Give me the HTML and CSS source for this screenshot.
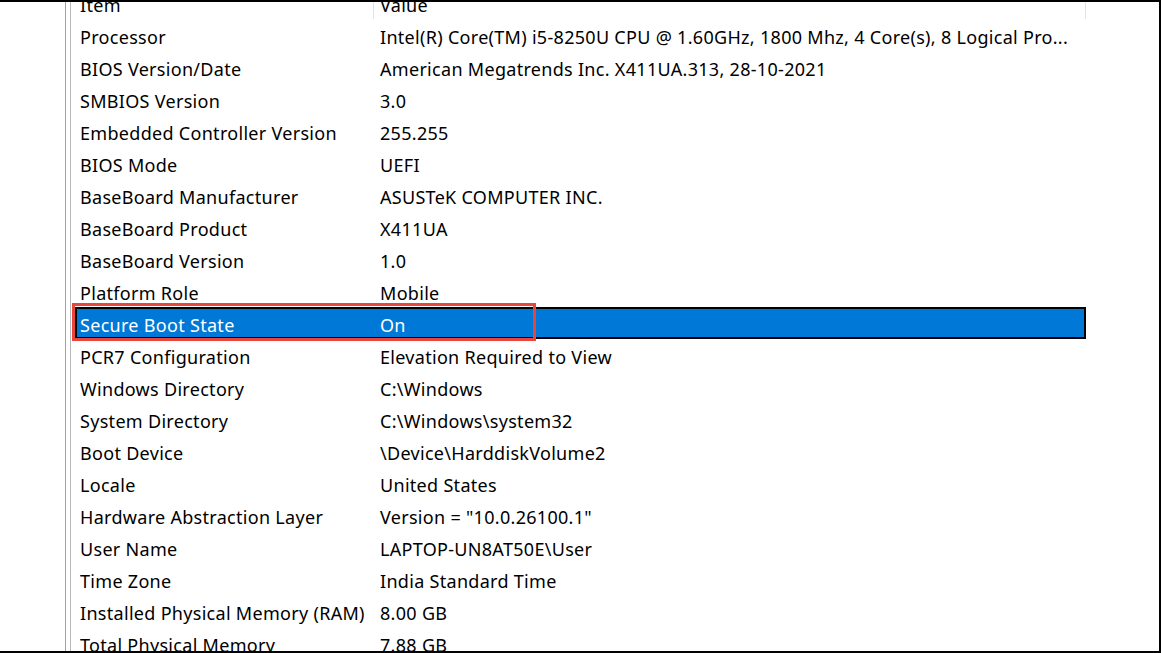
FILE: index.html
```html
<!DOCTYPE html>
<html lang="en">
<head>
<meta charset="utf-8">
<title>System Information</title>
<link rel="stylesheet" href="styles.css">
</head>
<body>
<div class="frame">
  <div class="gutter"></div>
  <div class="panel">
    <div class="inner">
      <div class="list">
        <div class="header">
          <div class="hcell hitem"><span class="htext">Item</span></div>
          <div class="hcell hvalue"><span class="htext">Value</span></div>
        </div>
        <div class="row"><div class="cell">Processor</div><div class="cell">Intel(R) Core(TM) i5-8250U CPU @ 1.60GHz, 1800 Mhz, 4 Core(s), 8 Logical Pro...</div></div>
        <div class="row"><div class="cell">BIOS Version/Date</div><div class="cell">American Megatrends Inc. X411UA.313, 28-10-2021</div></div>
        <div class="row"><div class="cell">SMBIOS Version</div><div class="cell">3.0</div></div>
        <div class="row"><div class="cell">Embedded Controller Version</div><div class="cell">255.255</div></div>
        <div class="row"><div class="cell">BIOS Mode</div><div class="cell">UEFI</div></div>
        <div class="row"><div class="cell">BaseBoard Manufacturer</div><div class="cell">ASUSTeK COMPUTER INC.</div></div>
        <div class="row"><div class="cell">BaseBoard Product</div><div class="cell">X411UA</div></div>
        <div class="row"><div class="cell">BaseBoard Version</div><div class="cell">1.0</div></div>
        <div class="row"><div class="cell">Platform Role</div><div class="cell">Mobile</div></div>
        <div class="row selected"><div class="cell">Secure Boot State</div><div class="cell">On</div><div class="callout"></div></div>
        <div class="row"><div class="cell">PCR7 Configuration</div><div class="cell">Elevation Required to View</div></div>
        <div class="row"><div class="cell">Windows Directory</div><div class="cell">C:\Windows</div></div>
        <div class="row"><div class="cell">System Directory</div><div class="cell">C:\Windows\system32</div></div>
        <div class="row"><div class="cell">Boot Device</div><div class="cell">\Device\HarddiskVolume2</div></div>
        <div class="row"><div class="cell">Locale</div><div class="cell">United States</div></div>
        <div class="row"><div class="cell">Hardware Abstraction Layer</div><div class="cell">Version = "10.0.26100.1"</div></div>
        <div class="row"><div class="cell">User Name</div><div class="cell">LAPTOP-UN8AT50E\User</div></div>
        <div class="row"><div class="cell">Time Zone</div><div class="cell">India Standard Time</div></div>
        <div class="row"><div class="cell">Installed Physical Memory (RAM)</div><div class="cell">8.00 GB</div></div>
        <div class="row"><div class="cell">Total Physical Memory</div><div class="cell">7.88 GB</div></div>
      </div>
    </div>
  </div>
</div>
</body>
</html>
```
FILE: styles.css
```css
html, body {
  margin: 0;
  padding: 0;
  background: #ffffff;
  overflow: hidden;
}
body {
  font-family: "Noto Sans", "Open Sans", "DejaVu Sans", sans-serif;
  font-size: 18px;
  letter-spacing: 0.3px;
  color: #000000;
}
.frame {
  box-sizing: border-box;
  width: 1161px;
  height: 653px;
  border-top: 2px solid #000;
  border-right: 2px solid #000;
  border-bottom: 2px solid #000;
  display: flex;
  overflow: hidden;
  background: #fff;
}
.gutter {
  width: 65px;
  flex: none;
}
.panel {
  flex: 1;
  border-left: 1px solid #a0a0a0;
  padding-left: 4px;
  display: flex;
}
.inner {
  flex: 1;
  border-left: 1px solid #b9b9b9;
  padding-left: 4px;
}
.list {
  width: 1011px;
}
.header {
  height: 17px;
  display: flex;
  overflow: hidden;
}
.hcell {
  box-sizing: border-box;
  height: 17px;
  overflow: visible;
}
.hitem {
  width: 298px;
  padding-left: 5px;
}
.hvalue {
  width: 713px;
  border-left: 1px solid #e3e3e3;
  border-right: 1px solid #e3e3e3;
  padding-left: 6px;
}
.htext {
  display: block;
  margin-top: -15px;
  padding-top: 4px;
  line-height: 28px;
  white-space: nowrap;
}
.row {
  position: relative;
  box-sizing: border-box;
  height: 32px;
  border: 2px solid transparent;
  padding-top: 2px;
  display: grid;
  grid-template-columns: 300px 1fr;
  line-height: 28px;
  white-space: nowrap;
}
.cell {
  padding-left: 3px;
  overflow: hidden;
}
.selected {
  background: #0078d7;
  border-color: #000000;
  color: #ffffff;
}
.callout {
  position: absolute;
  left: -5px;
  top: -6px;
  width: 464px;
  height: 38px;
  box-sizing: border-box;
  border: 3px solid #e8453c;
}
```
